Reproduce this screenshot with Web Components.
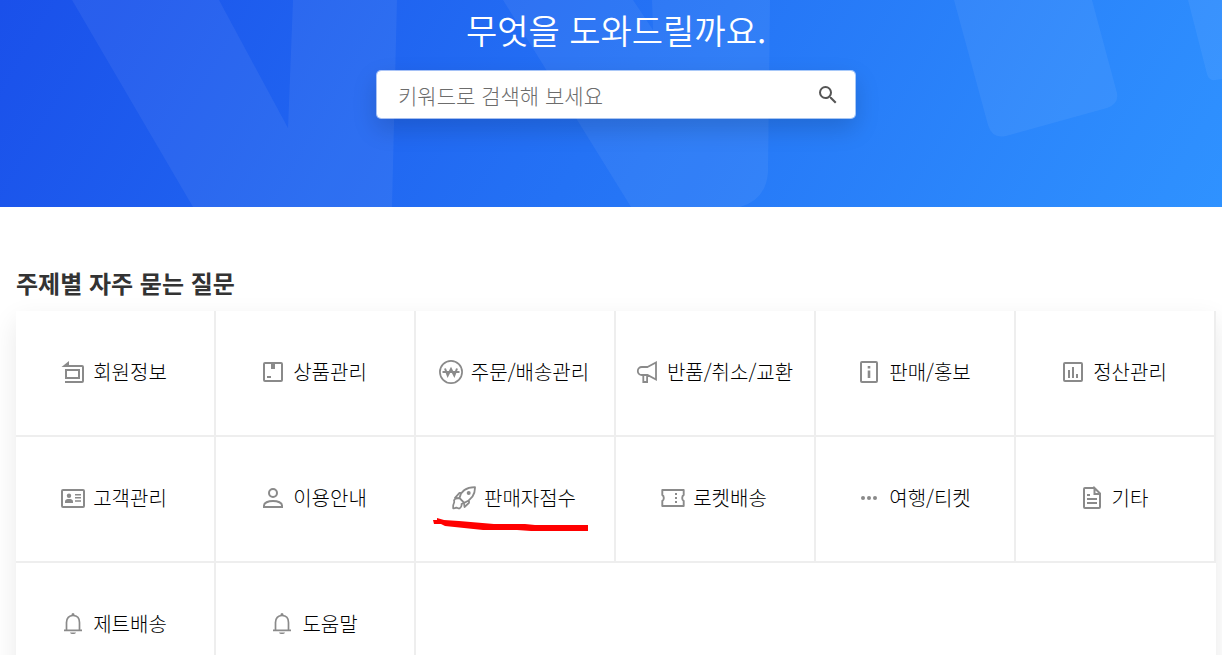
<!DOCTYPE html>
<html lang="ko">
<head>
<meta charset="utf-8">
<meta name="viewport" content="width=device-width, initial-scale=1">
<title>도움말 센터</title>
<style>
  body { margin: 0; background: #fff; color: #111; font-family: "Noto Sans CJK KR", sans-serif; }
</style>
</head>
<body>
<help-page>
  <help-hero slot="hero">
    <span slot="title">무엇을 도와드릴까요.</span>
    <search-box placeholder="키워드로 검색해 보세요"></search-box>
  </help-hero>
  <topic-section>
    <span slot="heading">주제별 자주 묻는 질문</span>
    <topic-card icon="member">회원정보</topic-card>
    <topic-card icon="product">상품관리</topic-card>
    <topic-card icon="order">주문/배송관리</topic-card>
    <topic-card icon="megaphone">반품/취소/교환</topic-card>
    <topic-card icon="info">판매/홍보</topic-card>
    <topic-card icon="chart">정산관리</topic-card>
    <topic-card icon="idcard">고객관리</topic-card>
    <topic-card icon="user">이용안내</topic-card>
    <topic-card icon="rocket" marked>판매자점수</topic-card>
    <topic-card icon="ticket">로켓배송</topic-card>
    <topic-card icon="dots">여행/티켓</topic-card>
    <topic-card icon="document">기타</topic-card>
    <topic-card icon="bell">제트배송</topic-card>
    <topic-card icon="bell">도움말</topic-card>
  </topic-section>
</help-page>

<script>
const shadow = (el, html) => { el.attachShadow({ mode: 'open' }).innerHTML = html; };

const ICONS = {
  member: '<path d="M4 6h17a1 1 0 0 1 1 1v14a1 1 0 0 1-1 1H4"/><rect x="5" y="10" width="13" height="8"/><path class="f" d="M0.5 7 8 1v6z"/>',
  product: '<rect x="3" y="3" width="18" height="18" rx="1"/><path class="f" d="M10 3h4v6h-4zM6 16h4v2H6z"/>',
  order: '<circle cx="12" cy="12" r="11.1" stroke-width="1.7"/><path stroke-width="2" d="M6 8.500 8.700 15.500 12 9l3.300 6.500L18 8.500"/><path stroke-width="2" d="M3.500 12h17"/>',
  megaphone: '<path stroke-width="1.8" d="M12.5 7 21 2.5v17l-8.500-4.500H6.800a4 4 0 0 1 0-8zM8.300 15v7h3.800v-7"/>',
  info: '<rect x="4" y="2" width="16" height="20" rx="1"/><path class="f" d="M10.700 6h2.600v2.500h-2.600zM10.700 10.500h2.600V18h-2.600z"/>',
  chart: '<rect x="3" y="3" width="18" height="18" rx="1"/><path class="f" d="M7 10h2v8H7zM11 7h2v11h-2zM15 14h2v4h-2z"/>',
  idcard: '<rect x="1" y="4" width="22" height="17" rx="1"/><circle class="f" cx="8" cy="9.800" r="2.200"/><path class="f" d="M4 17v-1.500C4 13.500 6 13 8 13s4 .5 4 2.500V17z"/><path stroke-width="1.500" d="M14 8.800h6M14 11.800h6M14 15h6"/>',
  user: '<circle cx="12" cy="7" r="4"/><path d="M3 21v-1.500C3 16.800 7 15 12 15s9 1.800 9 4.500V21z"/>',
  rocket: '<path stroke-width="1.800" stroke-linejoin="round" d="M7.500 12C8.500 7 12.500 1.500 23 1.200c.2 7.300-3.500 12.800-10.800 15.600zM9.800 6.800H7.500l-4.500 5 4.500.4M17 14v2.800l-4.500 4.200-.5-4"/><circle class="f" cx="16.700" cy="7" r="2"/><path stroke-width="1.700" stroke-linejoin="round" d="M7.500 12.500c-2.500-.3-5 .2-5.500 2 .2 1 .5 1.500 0 2.300-.8 1.700-1 3.700-.8 5.500 1.500.2 2.300-.3 3.300-.8 1 .3 1.800 1.200 3 1 1.500-1 2.500-2.500 2-4.500l2.500-1.200"/>',
  ticket: '<path stroke-width="1.900" stroke-linejoin="round" d="M1.300 4h21.400v5c-2 .8-2 5.200 0 6v5H1.300v-5c2-.8 2-5.200 0-6z"/><path class="f" d="M14 7h2v2h-2zM14 11h2v2h-2zM14 15h2v2h-2z"/>',
  dots: '<g class="f"><circle cx="6" cy="12" r="2"/><circle cx="12" cy="12" r="2"/><circle cx="18" cy="12" r="2"/></g>',
  document: '<path d="M14.500 2H5a1 1 0 0 0-1 1v18a1 1 0 0 0 1 1h14a1 1 0 0 0 1-1V7.500L14.500 2v6H20"/><path stroke-width="1.800" d="M7 9h3M7 13h10M7 17h10"/>',
  bell: '<path stroke-width="1.700" d="M3 18.300h18M5.500 18V10.500C5.500 6 8 3.500 12 3.500s6.500 2.500 6.500 7V18"/><path class="f" d="M10.500 3.500v-1a1.500 1.500 0 0 1 3 0v1zM9 20.500h6c-.5 2-5.500 2-6 0z"/>',
  search: '<path class="f" d="M15.500 14h-.79l-.28-.27A6.470 6.470 0 0 0 16 9.500 6.500 6.500 0 1 0 9.500 16c1.610 0 3.090-.59 4.230-1.570l.27.28v.79l5 4.990L20.490 19l-4.990-5zm-6 0C7.010 14 5 11.990 5 9.500S7.010 5 9.500 5 14 7.010 14 9.500 11.990 14 9.500 14z"/>'
};

customElements.define('line-icon', class extends HTMLElement {
  connectedCallback() {
    if (this.shadowRoot) return;
    shadow(this, `
      <style>
        :host { display: block; flex: none; width: 24px; height: 24px; color: #8a8a8a; }
        svg { display: block; width: 100%; height: 100%; fill: none; stroke: currentColor; stroke-width: 2; }
        .f { fill: currentColor; stroke: none; }
      </style>
      <svg viewBox="0 0 24 24" aria-hidden="true">${ICONS[this.getAttribute('name')] || ''}</svg>`);
  }
});

customElements.define('search-box', class extends HTMLElement {
  connectedCallback() {
    if (this.shadowRoot) return;
    const hint = this.getAttribute('placeholder');
    shadow(this, `
      <style>
        :host { display: block; width: 100%; max-width: 480px; }
        form { display: flex; align-items: center; height: 49px; box-sizing: border-box;
               margin: 0; padding: 0 15px 0 21px; border: 1px solid rgba(255,255,255,.6); border-radius: 5px;
               background: #fff; background-clip: padding-box; box-shadow: 0 10px 24px rgba(0,0,0,.15); }
        input { flex: 1; min-width: 0; height: 100%; box-sizing: border-box; padding: 0; border: 0; outline: 0; background: none;
                font: 300 21px "Noto Sans CJK KR", sans-serif; color: #222; }
        input::placeholder { color: #6c6c6c; opacity: 1; }
        button { padding: 0; border: 0; background: none; cursor: pointer; }
        line-icon { color: #555; }
      </style>
      <form role="search">
        <input type="text" aria-label="${hint}" placeholder="${hint}">
        <button type="button" aria-label="검색"><line-icon name="search"></line-icon></button>
      </form>`);
  }
});

customElements.define('help-hero', class extends HTMLElement {
  connectedCallback() {
    if (this.shadowRoot) return;
    shadow(this, `
      <style>
        :host { display: block; position: relative; overflow: hidden;
                background: linear-gradient(120deg, #1a50ea 0%, #2472f5 50%, #2f92ff 100%); }
        .shapes { position: absolute; inset: 0; width: 100%; height: 100%; fill: #fff; }
        .content { position: relative; display: flex; flex-direction: column; align-items: center;
                   gap: 16px; padding: 6px 6px 88px 16px; }
        h1 { margin: 0; color: #fff; font-size: 34px; line-height: 48px; font-weight: 350; }
      </style>
      <svg class="shapes" viewBox="0 0 1222 207" preserveAspectRatio="xMidYMin slice" aria-hidden="true">
        <path fill-opacity=".06" d="M72 0H219L288 128 293 0H397L392 207H193z"/>
        <path fill-opacity=".06" d="M503 0H633L653 30 652 0H770L768 172Q766 200 740 207H631z"/>
        <path fill-opacity=".06" d="M954 0H1092L1117 93Q1119 104 1107 108L1006 136Q992 139 988 125z"/>
        <path fill-opacity=".06" d="M1188 0H1222V79L1215 80Q1209 81 1207 74z"/>
      </svg>
      <div class="content">
        <h1><slot name="title"></slot></h1>
        <slot></slot>
      </div>`);
  }
});

customElements.define('topic-card', class extends HTMLElement {
  connectedCallback() {
    if (this.shadowRoot) return;
    const mark = this.hasAttribute('marked') ? `
      <svg class="mark" viewBox="0 0 156 16" aria-hidden="true">
        <path d="M0 3h4L4 1l7 2 15 1 35 3h31l10 1h53v6H98l-14-1H50L12 9 8 7H1z"/>
      </svg>` : '';
    shadow(this, `
      <style>
        :host { display: block; position: relative; box-sizing: border-box; height: 126px;
                border-right: 2px solid #eee; border-bottom: 2px solid #eee; background: #fff; }
        a { display: flex; align-items: center; justify-content: center; gap: 8px; height: 100%; box-sizing: border-box;
            padding: 0 2px 2px 0; color: #000; text-decoration: none; font-size: 20px; line-height: 28px; font-weight: 300; white-space: nowrap; }
        .mark { position: absolute; left: 17px; top: 80px; width: 156px; height: 16px; fill: #f00; }
      </style>
      <a href="#"><line-icon name="${this.getAttribute('icon')}"></line-icon><span><slot></slot></span></a>${mark}`);
  }
});

customElements.define('topic-section', class extends HTMLElement {
  connectedCallback() {
    if (this.shadowRoot) return;
    shadow(this, `
      <style>
        :host { display: block; padding: 58px 6px 48px 16px; }
        h2 { margin: 0 0 10px; color: #333; font-size: 24px; line-height: 36px; font-weight: 700; }
        .grid { display: grid; grid-template-columns: repeat(6, 1fr); background: #fff;
                box-shadow: 0 10px 26px rgba(0,0,0,.09); }
      </style>
      <h2><slot name="heading"></slot></h2>
      <div class="grid"><slot></slot></div>`);
  }
});

customElements.define('help-page', class extends HTMLElement {
  connectedCallback() {
    if (this.shadowRoot) return;
    shadow(this, `
      <style>:host { display: block; overflow: hidden; }</style>
      <slot name="hero"></slot>
      <main><slot></slot></main>`);
  }
});
</script>
</body>
</html>
